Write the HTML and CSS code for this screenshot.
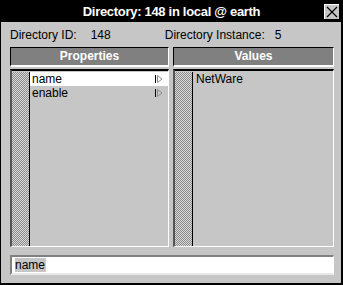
FILE: index.html
```html
<!DOCTYPE html>
<html lang="en">
<head>
    <meta charset="UTF-8">
    <title>Directory</title>
    <link rel="stylesheet" href="styles.css">
</head>
<body>
    <div class="window">
        <div class="titlebar">
            <span class="title">Directory: 148 in local @ earth</span>
            <span class="close">
                <svg width="14" height="14" viewBox="0 0 14 14">
                    <path d="M2 2 L12 12 M12 2 L2 12" stroke="#000" stroke-width="1.2" fill="none"/>
                </svg>
            </span>
        </div>
        <div class="info">
            <span class="label">Directory ID:</span><span class="val">148</span>
            <span class="label inst">Directory Instance:</span><span class="val last">5</span>
        </div>
        <div class="panels">
            <div class="panel">
                <div class="header">Properties</div>
                <div class="list">
                    <div class="strip"></div>
                    <ul class="rows">
                        <li class="selected">name <svg class="arrow" width="8" height="8" viewBox="0 0 8 8"><path d="M0.5 0 V8" stroke="#000"/><path d="M2.5 0.5 L7 4 L2.5 7.5 Z" stroke="#8c8c8c" fill="none"/></svg></li>
                        <li>enable <svg class="arrow" width="8" height="8" viewBox="0 0 8 8"><path d="M0.5 0 V8" stroke="#000"/><path d="M2.5 0.5 L7 4 L2.5 7.5 Z" stroke="#8c8c8c" fill="none"/></svg></li>
                    </ul>
                </div>
            </div>
            <div class="panel">
                <div class="header">Values</div>
                <div class="list">
                    <div class="strip"></div>
                    <ul class="rows">
                        <li class="plain">NetWare</li>
                    </ul>
                </div>
            </div>
        </div>
        <div class="entry"><span class="sel">name</span></div>
    </div>
</body>
</html>
```
FILE: styles.css
```css
body {
    margin: 0;
    padding: 0;
    background: #c6c6c6;
    font-family: "Liberation Sans", Arial, sans-serif;
    font-size: 12px;
}
.window {
    width: 343px;
    height: 285px;
    box-sizing: border-box;
    border-left: 1px solid #000;
    border-top: 1px solid #000;
    border-right: 2px solid #000;
    border-bottom: 2px solid #000;
    background: #c6c6c6;
    display: flex;
    flex-direction: column;
}
.titlebar {
    height: 21px;
    background: #000;
    color: #fff;
    display: flex;
    align-items: center;
    padding-left: 18px;
}
.title {
    flex: 1;
    text-align: center;
    font-weight: bold;
    font-size: 13px;
    letter-spacing: -0.3px;
}
.close {
    width: 14px;
    height: 14px;
    margin-right: 2px;
    background: #c6c6c6;
    border-top: 1px solid #fff;
    border-left: 1px solid #fff;
    display: flex;
}
.info {
    height: 24px;
    display: flex;
    align-items: center;
    padding-left: 9px;
    padding-top: 1px;
    color: #000;
}
.info .val {
    margin-left: 14px;
}
.info .inst {
    margin-left: 54px;
}
.info .last {
    margin-left: 10px;
}
.panels {
    display: grid;
    grid-template-columns: 159px 161px;
    column-gap: 4px;
    padding-left: 9px;
}
.header {
    height: 17px;
    background: #808080;
    border-top: 1px solid #000;
    border-left: 1px solid #000;
    border-bottom: 2px solid #fff;
    border-right: 1px solid #fff;
    color: #fff;
    font-weight: bold;
    text-align: center;
    line-height: 17px;
}
.list {
    margin-top: 2px;
    height: 175px;
    border-top: 2px solid #000;
    border-left: 2px solid #555;
    border-bottom: 1px solid #fff;
    border-right: 1px solid #fff;
    display: flex;
}
.strip {
    width: 17px;
    margin-top: 1px;
    border-right: 1px solid #000;
    background: repeating-conic-gradient(#8a8a8a 0 25%, #dadada 0 50%) 0 0 / 2px 2px;
}
.rows {
    list-style: none;
    margin: 0;
    padding: 1px 0 0 0;
    flex: 1;
}
.rows li {
    height: 14px;
    line-height: 14px;
    padding-left: 2px;
    display: flex;
    justify-content: space-between;
    align-items: center;
    padding-right: 5px;
}
.rows li.selected {
    background: #fff;
}
.rows li.plain {
    padding-left: 3px;
}
.entry {
    margin: 8px 0 0 9px;
    width: 318px;
    height: 16px;
    background: #fff;
    border-top: 2px solid #808080;
    border-left: 2px solid #808080;
    border-bottom: 2px solid #e8e8e8;
    border-right: 1px solid #fff;
    padding-left: 3px;
    display: flex;
    align-items: center;
}
.entry .sel {
    background: #c6c6c6;
    line-height: 14px;
    padding-right: 1px;
}
```
